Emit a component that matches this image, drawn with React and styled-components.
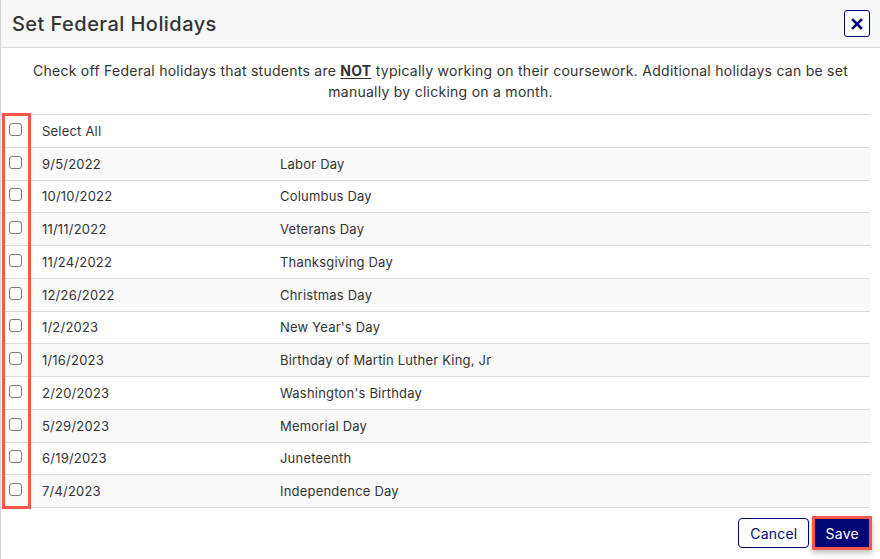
import React from 'react';
import styled, { createGlobalStyle } from 'styled-components';

const holidays = [
	{ date: '9/5/2022', name: 'Labor Day' },
	{ date: '10/10/2022', name: 'Columbus Day' },
	{ date: '11/11/2022', name: 'Veterans Day' },
	{ date: '11/24/2022', name: 'Thanksgiving Day' },
	{ date: '12/26/2022', name: 'Christmas Day' },
	{ date: '1/2/2023', name: "New Year's Day" },
	{ date: '1/16/2023', name: 'Birthday of Martin Luther King, Jr' },
	{ date: '2/20/2023', name: "Washington's Birthday" },
	{ date: '5/29/2023', name: 'Memorial Day' },
	{ date: '6/19/2023', name: 'Juneteenth' },
	{ date: '7/4/2023', name: 'Independence Day' },
];

const GlobalStyle = createGlobalStyle`
	html, body {
		margin: 0;
		padding: 0;
		background: #fff;
	}
	body {
		font-family: Inter, 'Noto Sans', sans-serif;
		color: #333;
	}
`;

const App = () => {
	return (
		<>
			<GlobalStyle />
			<Modal>
				<Header>
					<Title>Set Federal Holidays</Title>
					<CloseButton type='button' aria-label='Close'>
						<svg width='12' height='12' viewBox='0 0 12 12'>
							<path
								d='M2 2 L10 10 M10 2 L2 10'
								stroke='currentColor'
								strokeWidth='2.6'
								strokeLinecap='square'
							/>
						</svg>
					</CloseButton>
				</Header>
				<Body>
					<Intro>
						Check off Federal holidays that students are <Strong>NOT</Strong> typically
						working on their coursework. Additional holidays can be set manually by
						clicking on a month.
					</Intro>
					<TableWrap>
						<Table>
							<tbody>
								<Row>
									<CheckCell>
										<Check type='checkbox' />
									</CheckCell>
									<Cell colSpan={2}>Select All</Cell>
								</Row>
								{holidays.map((h, i) => (
									<Row key={h.date} $striped={i % 2 === 0}>
										<CheckCell>
											<Check type='checkbox' />
										</CheckCell>
										<DateCell>{h.date}</DateCell>
										<Cell>{h.name}</Cell>
									</Row>
								))}
							</tbody>
						</Table>
						<Highlight />
					</TableWrap>
				</Body>
				<Footer>
					<OutlineButton type='button'>Cancel</OutlineButton>
					<Marked>
						<SolidButton type='button'>Save</SolidButton>
					</Marked>
				</Footer>
			</Modal>
		</>
	);
};

const Modal = styled.div`
	width: 880px;
	height: 559px;
	background: #fff;
	border-left: 1px solid #d6d6d6;
	box-sizing: border-box;
	display: flex;
	flex-direction: column;
`;

const Header = styled.div`
	height: 48px;
	flex-shrink: 0;
	box-sizing: border-box;
	background: #f7f7f7;
	border-bottom: 1px solid #dcdcdc;
	display: flex;
	align-items: center;
	justify-content: space-between;
	padding: 0 10px 0 11px;
`;

const Title = styled.h2`
	margin: 0;
	font-size: 20px;
	font-weight: 500;
	color: #333;
	letter-spacing: 0.45px;
`;

const CloseButton = styled.button`
	width: 26px;
	height: 27px;
	display: flex;
	align-items: center;
	justify-content: center;
	padding: 0;
	background: #fff;
	border: 1px solid #020576;
	border-radius: 3px;
	color: #020576;
	cursor: pointer;
`;

const Body = styled.div`
	display: flex;
	flex-direction: column;
`;

const Intro = styled.p`
	margin: 0;
	padding: 12px 20px 12px;
	text-align: center;
	font-size: 14px;
	line-height: 21px;
	letter-spacing: 0.26px;
	color: #333;
`;

const Strong = styled.strong`
	font-weight: 700;
	text-decoration: underline;
	text-underline-offset: 2px;
`;

const TableWrap = styled.div`
	position: relative;
	margin-right: 10px;
`;

const Table = styled.table`
	width: 100%;
	border-collapse: collapse;
	border-top: 1px solid #dcdcdc;
	font-size: 13px;
	letter-spacing: 0.2px;
	color: #333;
`;

const Row = styled.tr`
	height: 32.75px;
	background: ${(p) => (p.$striped ? '#f9f9f9' : '#fff')};
	border-bottom: 1px solid #dcdcdc;
`;

const CheckCell = styled.td`
	width: 23px;
	padding: 0 0 0 8px;
	vertical-align: middle;
`;

const Cell = styled.td`
	padding: 0 10px;
	vertical-align: middle;
`;

const DateCell = styled(Cell)`
	width: 218px;
`;

const Check = styled.input`
	appearance: none;
	display: block;
	margin: -3px 0 0 0;
	width: 13px;
	height: 13px;
	border: 1px solid #7a7a7a;
	border-radius: 3px;
	background: #fff;
`;

const Highlight = styled.div`
	position: absolute;
	left: 1px;
	top: -1px;
	bottom: -1px;
	width: 23px;
	border: 3px solid #f5584b;
	pointer-events: none;
`;

const Footer = styled.div`
	display: flex;
	justify-content: flex-end;
	align-items: center;
	gap: 3px;
	padding: 8px 8px 0 0;
`;

const OutlineButton = styled.button`
	height: 30px;
	padding: 0 11px;
	font-family: inherit;
	font-size: 14px;
	letter-spacing: 0.2px;
	color: #020576;
	background: #fff;
	border: 1px solid #020576;
	border-radius: 4px;
	cursor: pointer;
`;

const Marked = styled.span`
	display: inline-flex;
	border: 3px solid #f5584b;
	box-shadow: 0 3px 6px rgba(0, 0, 0, 0.25);
`;

const SolidButton = styled.button`
	height: 28px;
	padding: 0 10px;
	font-family: inherit;
	font-size: 14px;
	letter-spacing: 0.3px;
	color: #fff;
	background: #020576;
	border: none;
	cursor: pointer;
`;

export default App;
